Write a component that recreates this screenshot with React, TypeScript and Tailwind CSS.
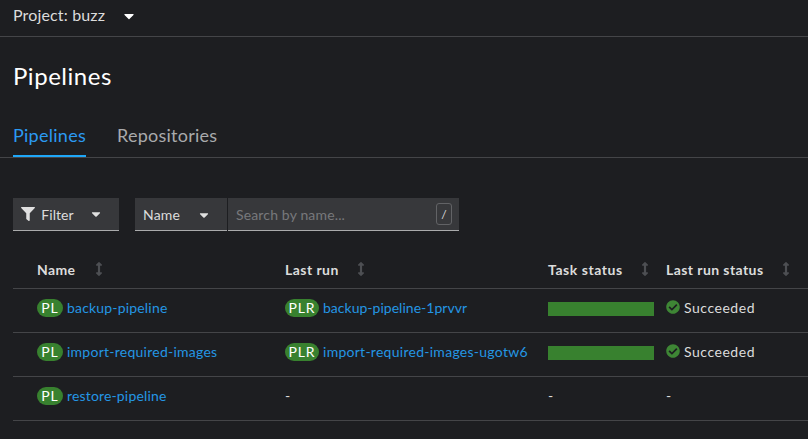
import { FaArrowsAltV, FaCaretDown, FaCheckCircle, FaFilter } from "react-icons/fa";

const grid = "grid grid-cols-[248px_263px_118px_1fr] pl-6";

const headers = [
  { label: "Name", spacing: "tracking-[0.35px]", gap: "gap-[17px]" },
  { label: "Last run", spacing: "tracking-[0.45px]", gap: "gap-[15px]" },
  { label: "Task status", spacing: "tracking-[0.55px]", gap: "gap-[15px]" },
  { label: "Last run status", spacing: "tracking-[0.42px]", gap: "gap-[16px]" },
];

const rows = [
  { name: "backup-pipeline", nameSpacing: "tracking-[0.18px]", run: "backup-pipeline-1prvvr", runSpacing: "tracking-[0.02px]" },
  { name: "import-required-images", nameSpacing: "tracking-[0.25px]", run: "import-required-images-ugotw6", runSpacing: "tracking-[0.27px]" },
  { name: "restore-pipeline", nameSpacing: "tracking-[0.16px]", run: null, runSpacing: "" },
];

function Badge({ kind }: { kind: "PL" | "PLR" }) {
  return (
    <span
      className={`mr-1 flex h-[18px] items-center justify-center rounded-full bg-[#38812f] pb-[2px] text-white ${
        kind === "PL" ? "w-[26px] tracking-[1px]" : "w-[34px] tracking-[0.8px]"
      }`}
    >
      {kind}
    </span>
  );
}

function Dash() {
  return <span className="pb-[2px] tracking-normal">-</span>;
}

export default function App() {
  return (
    <div className="h-[439px] w-[808px] overflow-hidden bg-[#1d1e21] font-['Lato','Noto_Sans',sans-serif] text-[14px] leading-[21px] text-[#dcdcdc]">
      <header className="flex h-[37px] items-center border-b border-[#444548] pb-[5px] pl-[13px] text-[16px]">
        <span className="pb-[2px] tracking-[0.15px]">Project: buzz</span>
        <FaCaretDown className="ml-[19px] h-4 w-[10px] text-white" />
      </header>

      <h1 className="flex h-[79px] items-center pb-[2px] pl-[13px] text-[24px] tracking-[0.53px] text-white">Pipelines</h1>

      <nav className="flex h-[42px] gap-8 border-b border-[#444548] pl-[13px] text-[18px]">
        <div className="flex w-[73px] items-center border-b-2 border-[#1fa7f8] tracking-[0.27px] whitespace-nowrap text-[#2b9af3]">Pipelines</div>
        <div className="-ml-px flex items-center pb-[2px] tracking-[0.24px] text-[#a9aaac]">Repositories</div>
      </nav>

      <div className="mt-10 flex h-[33px] pl-[13px]">
        <button className="flex w-[106px] items-center border-b border-[#aaabac] bg-[#37383b] pl-2">
          <FaFilter className="h-[14px] w-[14px] text-[#e0e0e0]" />
          <span className="ml-[6px] w-[33px] tracking-[0.08px]">Filter</span>
          <FaCaretDown className="ml-[17px] h-[14px] w-[10px] text-[#e0e0e0]" />
        </button>
        <button className="ml-4 flex w-[92px] items-center border-b border-[#aaabac] bg-[#37383b] pl-2">
          <span className="w-[37px] tracking-[0.2px]">Name</span>
          <FaCaretDown className="mt-[2px] ml-[19px] h-[14px] w-[10px] text-[#e0e0e0]" />
        </button>
        <div className="ml-px flex w-[231px] items-center justify-between border-b border-[#aaabac] bg-[#37383b] pr-[7px] pl-2">
          <span className="tracking-[0.15px] text-[#77787b]">Search by name...</span>
          <span className="flex h-[22px] w-4 items-center justify-center rounded-[3px] border border-[#626366] text-[12px]">/</span>
        </div>
      </div>

      <div className="mt-[21px] ml-[13px]">
        <div className={`${grid} h-[37px] border-b border-[#444548]`}>
          {headers.map((h) => (
            <div key={h.label} className={`flex items-center font-bold ${h.gap}`}>
              <span className={`pb-[2px] whitespace-nowrap ${h.spacing}`}>{h.label}</span>
              <FaArrowsAltV className="mb-[2px] h-[14px] w-[14px] shrink-0 text-[#4d4f53]" />
            </div>
          ))}
        </div>
        {rows.map((r) => (
          <div key={r.name} className={`${grid} h-11 border-b border-[#444548] pb-[5px]`}>
            <div className="flex items-center">
              <Badge kind="PL" />
              <span className={`pb-[2px] text-[#2496e4] ${r.nameSpacing}`}>{r.name}</span>
            </div>
            <div className="flex items-center">
              {r.run ? (
                <>
                  <Badge kind="PLR" />
                  <span className={`pb-[2px] text-[#2496e4] ${r.runSpacing}`}>{r.run}</span>
                </>
              ) : (
                <Dash />
              )}
            </div>
            <div className="flex items-center">
              {r.run ? <div className="mt-[2px] h-[14px] w-[106px] bg-[#38812f]" /> : <Dash />}
            </div>
            <div className="flex items-center">
              {r.run ? (
                <>
                  <FaCheckCircle className="mb-[2px] h-[14px] w-[14px] text-[#3e8635]" />
                  <span className="ml-1 pb-[2px] tracking-[0.53px]">Succeeded</span>
                </>
              ) : (
                <Dash />
              )}
            </div>
          </div>
        ))}
      </div>
    </div>
  );
}
